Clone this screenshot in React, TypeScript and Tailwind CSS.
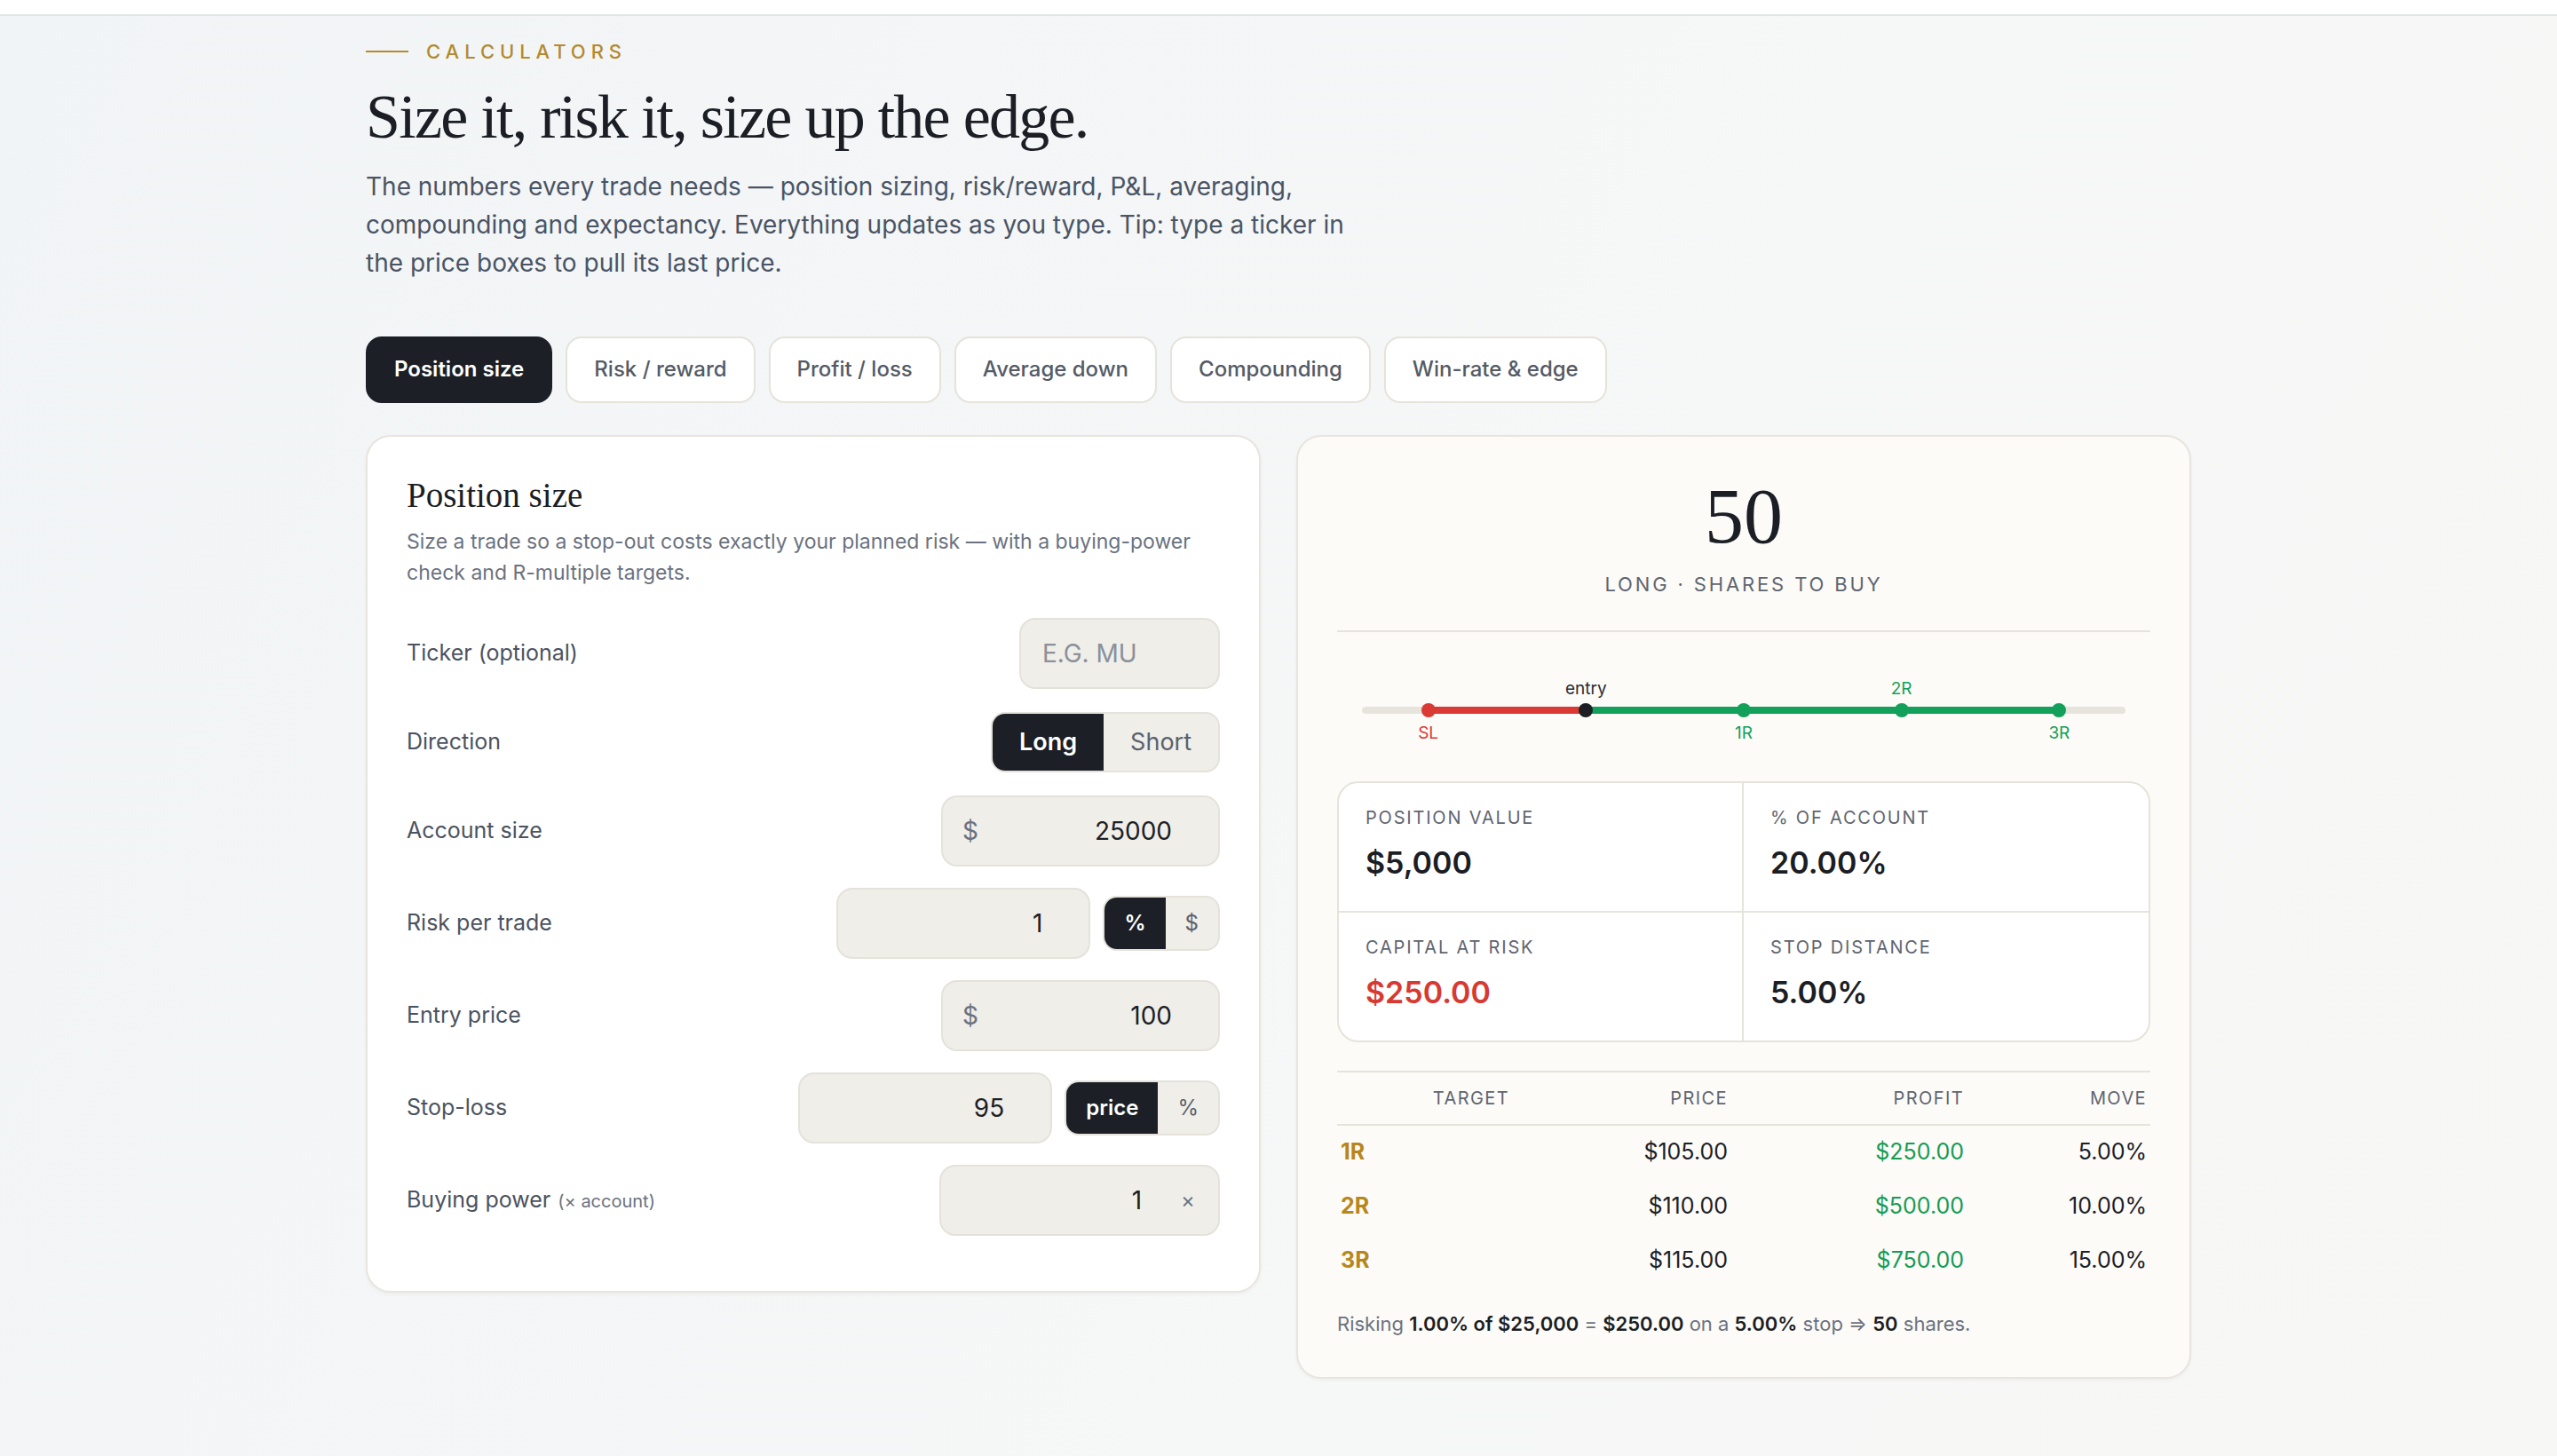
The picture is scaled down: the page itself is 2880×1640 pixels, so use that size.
import { useState } from "react"

const tabs = ["Position size", "Risk / reward", "Profit / loss", "Average down", "Compounding", "Win-rate & edge"]

function money(n: number, dp = 2) {
  return "$" + n.toLocaleString("en-US", { minimumFractionDigits: dp, maximumFractionDigits: dp })
}

function Field({ label, hint, children }: { label: string; hint?: string; children: React.ReactNode }) {
  return (
    <div className="flex items-center justify-between">
      <div className="text-[12.5px] text-[#4b5360]">
        {label}
        {hint && <span className="ml-1 text-[10px] text-[#6b7280]">{hint}</span>}
      </div>
      <div className="flex items-center gap-[7px]">{children}</div>
    </div>
  )
}

interface NumBoxProps {
  value: string
  onChange: (v: string) => void
  prefix?: string
  suffix?: string
  width: string
}

function NumBox({ value, onChange, prefix, suffix, width }: NumBoxProps) {
  return (
    <div className={`flex h-10 items-center rounded-[9px] border border-[#e4e2da] bg-[#efeee9] ${width}`}>
      {prefix && <span className="pl-[11px] text-[14px] text-[#6b7280]">{prefix}</span>}
      <input
        value={value}
        inputMode="decimal"
        onChange={(e) => onChange(e.target.value)}
        className={`h-full min-w-0 flex-1 bg-transparent text-right text-[14px] text-[#1d2026] outline-none ${suffix ? "pr-[22px]" : "pr-[26px]"}`}
      />
      {suffix && <span className="pr-[13px] text-[12px] text-[#6b7280]">{suffix}</span>}
    </div>
  )
}

function Seg({ options, value, onChange, big }: { options: string[]; value: string; onChange: (v: string) => void; big?: boolean }) {
  return (
    <div
      className={`flex overflow-hidden rounded-[8px] border border-[#e4e2da] bg-[#efeee9] ${big ? "h-[34px]" : "h-[31px]"}`}
    >
      {options.map((o) => (
        <button
          key={o}
          onClick={() => onChange(o)}
          className={`${big ? "px-[15px] text-[13.5px]" : "px-[11px] text-[12px]"} ${
            o === value ? "bg-[#1c1f26] font-semibold text-white" : "text-[#5b616c]"
          }`}
        >
          {o}
        </button>
      ))}
    </div>
  )
}

function Stat({ label, value, red, className }: { label: string; value: string; red?: boolean; className: string }) {
  return (
    <div className={`px-[15px] pb-[15px] pt-[13px] ${className}`}>
      <div className="text-[10px] uppercase leading-[13px] tracking-[0.09em] text-[#5f6570]">{label}</div>
      <div className={`mt-[7px] text-[17px] font-semibold leading-[24px] ${red ? "text-[#d63a32]" : "text-[#1b1e24]"}`}>
        {value}
      </div>
    </div>
  )
}

export default function App() {
  const [tab, setTab] = useState("Position size")
  const [ticker, setTicker] = useState("")
  const [direction, setDirection] = useState("Long")
  const [account, setAccount] = useState("25000")
  const [risk, setRisk] = useState("1")
  const [riskMode, setRiskMode] = useState("%")
  const [entry, setEntry] = useState("100")
  const [stop, setStop] = useState("95")
  const [stopMode, setStopMode] = useState("price")
  const [power, setPower] = useState("1")

  const acc = parseFloat(account) || 0
  const ent = parseFloat(entry) || 0
  const stopPrice = stopMode === "price" ? parseFloat(stop) || 0 : ent * (1 - (parseFloat(stop) || 0) / 100)
  const riskDollars = riskMode === "%" ? (acc * (parseFloat(risk) || 0)) / 100 : parseFloat(risk) || 0
  const perShare = Math.abs(ent - stopPrice)
  const maxShares = ent > 0 ? Math.floor((acc * (parseFloat(power) || 1)) / ent) : 0
  const shares = perShare > 0 ? Math.min(Math.floor(riskDollars / perShare), maxShares) : 0
  const posValue = shares * ent
  const atRisk = shares * perShare
  const stopPct = ent > 0 ? (perShare / ent) * 100 : 0
  const sign = direction === "Long" ? 1 : -1
  const targets = [1, 2, 3].map((r) => ({ r, price: ent + sign * perShare * r, profit: shares * perShare * r, move: stopPct * r }))

  // ladder scale
  const lo = Math.min(stopPrice, targets[2].price)
  const hi = Math.max(stopPrice, targets[2].price)
  const pad = (hi - lo) * 0.105
  const pct = (p: number) => (hi > lo ? ((p - (lo - pad)) / (hi - lo + pad * 2)) * 100 : 50)
  const points = [
    { key: "SL", p: stopPrice, color: "bg-[#d93a34]", text: "text-[#d93a34]", above: false },
    { key: "entry", p: ent, color: "bg-[#1b1e24]", text: "text-[#2a2d33]", above: true },
    { key: "1R", p: targets[0].price, color: "bg-[#12a05a]", text: "text-[#12a05a]", above: false },
    { key: "2R", p: targets[1].price, color: "bg-[#12a05a]", text: "text-[#12a05a]", above: true },
    { key: "3R", p: targets[2].price, color: "bg-[#12a05a]", text: "text-[#12a05a]", above: false },
  ]
  const span = (a: number, b: number) => ({ left: `${Math.min(pct(a), pct(b))}%`, width: `${Math.abs(pct(b) - pct(a))}%` })

  return (
    <div className="min-h-[820px] bg-[linear-gradient(115deg,#f1f4f6,#f6f7f7_60%,#f7f7f5)] font-['Inter','Noto_Sans',sans-serif] text-[#1b1e24] [zoom:2]">
      <div className="h-[9px] border-b border-[#e3e5e8] bg-white" />

      <div className="mx-auto w-full max-w-[1028px] pb-10">
        {/* Intro */}
        <div className="mt-[13px] flex items-center gap-2.5">
          <span className="h-px w-6 bg-[#b38a2e]" />
          <span className="text-[11px] font-medium uppercase leading-[14px] tracking-[0.27em] text-[#b38a2e]">Calculators</span>
        </div>
        <h1 className="mt-[10px] font-['Liberation_Serif','Times_New_Roman',serif] text-[35px] leading-[1.15] tracking-[-0.025em] text-[#1b1e24]">
          Size it, risk it, size up the edge.
        </h1>
        <p className="mt-[8px] max-w-[564px] text-[14px] leading-[21.7px] text-[#4a5464]">
          The numbers every trade needs — position sizing, risk/reward, P&amp;L, averaging, compounding and expectancy.
          Everything updates as you type. Tip: type a ticker in the price boxes to pull its last price.
        </p>

        {/* Tabs */}
        <div className="mt-[30px] flex gap-[7.5px]">
          {tabs.map((t) => (
            <button
              key={t}
              onClick={() => setTab(t)}
              className={`h-[37.5px] rounded-[9px] border px-[15px] text-[12px] ${
                t === tab
                  ? "border-[#1c1f26] bg-[#1c1f26] font-semibold text-white"
                  : "border-[#e6e3dc] bg-white font-medium text-[#545b66]"
              }`}
            >
              {t}
            </button>
          ))}
        </div>

        <div className="mt-[18px] grid grid-cols-2 items-start gap-5">
          {/* Inputs card */}
          <div className="rounded-[14px] border border-[#e8e5de] bg-white px-[22px] pb-[31px] pt-[21px] shadow-[0_1px_2px_rgba(0,0,0,0.04)]">
            <h2 className="font-['Liberation_Serif','Times_New_Roman',serif] text-[19.5px] leading-[23.75px] text-[#1b1e24]">
              Position size
            </h2>
            <p className="mt-1.5 text-[11.5px] leading-[17.2px] text-[#6b7280]">
              Size a trade so a stop-out costs exactly your planned risk — with a buying-power check and R-multiple targets.
            </p>

            <div className="mt-[17px] flex flex-col gap-3">
              <Field label="Ticker (optional)">
                <input
                  value={ticker}
                  onChange={(e) => setTicker(e.target.value.toUpperCase())}
                  placeholder="E.G. MU"
                  className="h-10 w-[113px] rounded-[9px] border border-[#e4e2da] bg-[#efeee9] px-3 text-[14px] text-[#1d2026] outline-none placeholder:text-[#8b9099]"
                />
              </Field>
              <Field label="Direction">
                <div className="flex h-9 items-center">
                  <Seg big options={["Long", "Short"]} value={direction} onChange={setDirection} />
                </div>
              </Field>
              <Field label="Account size">
                <NumBox prefix="$" value={account} onChange={setAccount} width="w-[157px]" />
              </Field>
              <Field label="Risk per trade">
                <NumBox value={risk} onChange={setRisk} width="w-[143px]" />
                <Seg options={["%", "$"]} value={riskMode} onChange={setRiskMode} />
              </Field>
              <Field label="Entry price">
                <NumBox prefix="$" value={entry} onChange={setEntry} width="w-[157px]" />
              </Field>
              <Field label="Stop-loss">
                <NumBox value={stop} onChange={setStop} width="w-[143px]" />
                <Seg options={["price", "%"]} value={stopMode} onChange={setStopMode} />
              </Field>
              <Field label="Buying power" hint="(× account)">
                <NumBox suffix="×" value={power} onChange={setPower} width="w-[158px]" />
              </Field>
            </div>
          </div>

          {/* Results card */}
          <div className="rounded-[14px] border border-[#e8e5de] bg-[#fcfbf8] px-[22px] pb-[22px] pt-[23px] shadow-[0_1px_2px_rgba(0,0,0,0.04)]">
            <div className="border-b border-[#e6e3db] pb-[18px] text-center">
              <div className="font-['Liberation_Serif','Times_New_Roman',serif] text-[44px] leading-none text-[#1b1e24]">{shares}</div>
              <div className="mt-2 text-[11px] uppercase leading-4 tracking-[0.13em] text-[#5f6570]">
                {direction} · shares to buy
              </div>
            </div>

            {/* Price ladder */}
            <div className="relative mx-[14px] h-[84px]">
              <div className="absolute inset-x-0 top-[42px] h-1 rounded-full bg-[#e7e4dc]" />
              <div className="absolute top-[42px] h-1 bg-[#d93a34]" style={span(stopPrice, ent)} />
              <div className="absolute top-[42px] h-1 bg-[#12a05a]" style={span(ent, targets[2].price)} />
              {points.map((pt) => (
                <div key={pt.key}>
                  <div className={`absolute top-[40px] -ml-1 h-2 w-2 rounded-full ${pt.color}`} style={{ left: `${pct(pt.p)}%` }} />
                  <div
                    className={`absolute -translate-x-1/2 text-[9.5px] leading-[12px] ${pt.text} ${pt.above ? "top-[26px]" : "top-[51px]"}`}
                    style={{ left: `${pct(pt.p)}%` }}
                  >
                    {pt.key}
                  </div>
                </div>
              ))}
            </div>

            {/* Stats */}
            <div className="grid grid-cols-2 overflow-hidden rounded-xl border border-[#e6e3db] bg-white">
              <Stat label="Position value" value={money(posValue, 0)} className="border-r border-[#e6e3db]" />
              <Stat label="% of account" value={`${acc ? ((posValue / acc) * 100).toFixed(2) : "0.00"}%`} className="" />
              <Stat label="Capital at risk" value={money(atRisk)} red className="border-r border-t border-[#e6e3db]" />
              <Stat label="Stop distance" value={`${stopPct.toFixed(2)}%`} className="border-t border-[#e6e3db]" />
            </div>

            {/* Targets */}
            <div className="mt-4">
              <div className="grid h-[31px] grid-cols-[97px_123px_133px_1fr] items-center border-y border-[#e6e3db] pr-[2px] text-right text-[10px] uppercase tracking-[0.07em] text-[#5f6570]">
                <span>Target</span>
                <span>Price</span>
                <span>Profit</span>
                <span>Move</span>
              </div>
              {targets.map((t) => (
                <div key={t.r} className="grid h-[30.5px] grid-cols-[97px_123px_133px_1fr] items-center pr-[2px] text-right text-[12.5px]">
                  <span className="pl-[2px] text-left font-bold text-[#b7871d]">{t.r}R</span>
                  <span className="text-[#1d2026]">{money(t.price)}</span>
                  <span className="text-[#179c55]">{money(t.profit)}</span>
                  <span className="text-[#1d2026]">{t.move.toFixed(2)}%</span>
                </div>
              ))}
            </div>

            <p className="mt-[12px] text-[11px] leading-4 text-[#6b7280]">
              Risking{" "}
              <b className="font-semibold text-[#1b1e24]">
                {riskMode === "%" ? `${(parseFloat(risk) || 0).toFixed(2)}%` : money(riskDollars)} of {money(acc, 0)}
              </b>{" "}
              = <b className="font-semibold text-[#1b1e24]">{money(riskDollars)}</b> on a{" "}
              <b className="font-semibold text-[#1b1e24]">{stopPct.toFixed(2)}%</b> stop ⇒{" "}
              <b className="font-semibold text-[#1b1e24]">{shares}</b> shares.
            </p>
          </div>
        </div>
      </div>
    </div>
  )
}
